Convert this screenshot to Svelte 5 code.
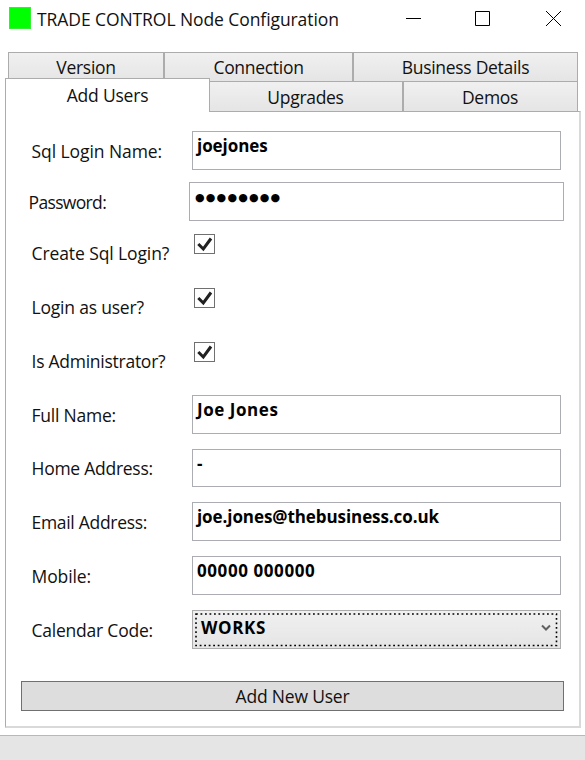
<script>
  const rows = [
    { label: 'Sql Login Name:', value: 'joejones', h: 51, ls: -0.07, vs: -0.05 },
    { label: 'Password:', value: '●●●●●●●●', kind: 'password', h: 51, ls: -0.65 },
    { label: 'Create Sql Login?', kind: 'check', h: 54, ls: -0.1 },
    { label: 'Login as user?', kind: 'check', h: 54, ls: -0.2 },
    { label: 'Is Administrator?', kind: 'check', h: 54, ls: -0.26 },
    { label: 'Full Name:', value: 'Joe Jones', h: 53, ls: -0.22, vs: 0.55 },
    { label: 'Home Address:', value: '-', h: 54, short: true, ls: -0.26, vs: 0 },
    { label: 'Email Address:', value: 'joe.jones@thebusiness.co.uk', h: 54, ls: -0.3, vs: -0.08 },
    { label: 'Mobile:', value: '00000 000000', h: 54, ls: -0.1, vs: 0.58 },
    { label: 'Calendar Code:', value: 'WORKS', kind: 'select', h: 54, ls: -0.22, vs: 0.6 }
  ];
</script>

<div class="window">
  <header>
    <span class="logo"></span>
    <span class="title">TRADE CONTROL Node Configuration</span>
    <svg class="controls" width="160" height="20" viewBox="0 0 160 20" fill="none" stroke="#000" stroke-width="1">
      <path d="M1 9.500h15" />
      <path d="M70.500 2.500h14v14h-14z" />
      <path d="M141 2l15 15M156 2l-15 15" />
    </svg>
  </header>

  <nav>
    <div class="tabs first">
      <div class="tab" style:width="156px">Version</div>
      <div class="tab" style:width="189px">Connection</div>
      <div class="tab" style:width="225px">Business Details</div>
    </div>
    <div class="tabs second">
      <div class="tab active">Add Users</div>
      <div class="tab" style:width="194px">Upgrades</div>
      <div class="tab" style:width="175px">Demos</div>
    </div>
  </nav>

  <main>
    {#each rows as row}
      <div class="row" class:pw={row.kind === 'password'} style:height="{row.h}px">
        <span class="label" style:letter-spacing="{row.ls}px">{row.label}</span>
        {#if row.kind === 'check'}
          <span class="check">
            <svg width="19" height="18" viewBox="0 0 19 18"><path d="M3.300 9l5 5L16 3.500" fill="none" stroke="#212121" stroke-width="3" /></svg>
          </span>
        {:else if row.kind === 'select'}
          <div class="field select">
            <svg class="focus" width="367" height="37"><rect x="3" y="3" width="360.500" height="31.500" fill="none" stroke="#000" stroke-width="1.600" stroke-dasharray="1.800 2.700" /></svg>
            <span style:letter-spacing="{row.vs}px">{row.value}</span>
            <svg width="10" height="8" viewBox="0 0 10 8"><path d="M1 1.500l4 4 4-4" fill="none" stroke="#606060" stroke-width="2" /></svg>
          </div>
        {:else if row.kind === 'password'}
          <div class="field dots">{row.value}</div>
        {:else}
          <div class="field" class:short={row.short} style:letter-spacing="{row.vs}px">{row.value}</div>
        {/if}
      </div>
    {/each}
    <button>Add New User</button>
  </main>
  <footer></footer>
</div>

<style>
  :global(body) { background: #fff; }
  .window {
    width: 585px; height: 760px; overflow: hidden; box-sizing: border-box;
    display: flex; flex-direction: column; background: #fff; color: #111;
    font: 17.5px/24px "Open Sans", "Noto Sans", sans-serif; letter-spacing: -0.3px;
  }
  .window * { box-sizing: border-box; }
  header { height: 52px; flex: none; display: flex; align-items: flex-start; padding: 7px 0 0 9px; }
  .logo { width: 22px; height: 22px; background: #0f0; border: 1px solid #35ef35; }
  .title { margin: 0 0 0 6px; width: 368px; white-space: nowrap; letter-spacing: -0.08px; }
  .controls { margin-top: 2px; }
  nav { flex: none; height: 60px; }
  .tabs { display: flex; }
  .first { padding-left: 8px; height: 29px; }
  .second { padding-left: 5px; height: 31px; align-items: flex-end; }
  .tab {
    height: 30px; flex: none; text-align: center; line-height: 29px;
    border: 1px solid #acacac; background: linear-gradient(#f0f0f0, #e5e5e5);
  }
  .second .tab { height: 31px; line-height: 30px; padding-right: 1px; }
  .second .active {
    width: 205px; height: 34px; margin-right: -1px; padding: 0; background: #fff; border-bottom: 0;
    position: relative; line-height: 33px; letter-spacing: -0.2px;
  }
  main {
    width: 576px; height: 617px; flex: none; margin: -1px 0 0 5px; padding: 12px 0 0 26px;
    border: 1px solid #acacac; border-right: 2px solid #d9d9d9; border-bottom: 2px solid #d9d9d9;
  }
  .row { display: flex; align-items: flex-start; }
  .label { width: 160px; line-height: 54px; white-space: nowrap; text-indent: -0.500px; }
  .field {
    width: 369px; height: 39px; margin-top: 7px; padding: 0 4px; border: 1px solid #abadb3;
    font-weight: 700; line-height: 28px; color: #000; font-size: 17px;
  }
  .short { height: 38px; margin-top: 8px; }
  .pw { margin-left: -3px; }
  .dots { width: 375px; padding-left: 5px; font: 11px/29px "DejaVu Sans", sans-serif; letter-spacing: 1.200px; }
  .check {
    width: 21px; height: 20px; margin: 8px 0 0 2px; border: 1px solid #707070; display: flex;
  }
  .select {
    position: relative; display: flex; justify-content: space-between; align-items: center;
    padding: 0 9px 3px 8px; background: linear-gradient(#f0f0f0, #e5e5e5); border-color: #acacac;
  }
  .focus { position: absolute; left: 0; top: 0; }
  button {
    display: block; width: 543px; height: 30px; margin: 24px 0 0 -11px; padding: 0; border: 1px solid #707070;
    background: #ddd; color: #111; font: inherit; letter-spacing: -0.2px;
  }
  footer { height: 25px; flex: none; margin-top: 7px; border-top: 1px solid #b8b8b8; background: #e5e5e5; }
</style>
